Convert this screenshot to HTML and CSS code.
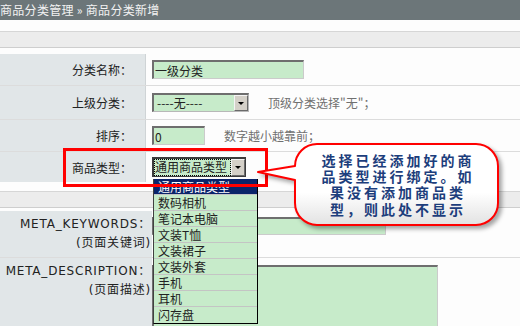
FILE: index.html
```html
<!DOCTYPE html>
<html lang="zh-CN">
<head>
    <meta charset="UTF-8">
    <title>商品分类新增</title>
    <link rel="stylesheet" href="styles.css">
</head>
<body>
    <div class="crumb">商品分类管理 » 商品分类新增</div>
    <div class="tab-bar"></div>

    <div class="form">
        <div class="row row-1">
            <div class="label">分类名称：</div>
            <div class="field">
                <div class="input input-name">一级分类</div>
            </div>
        </div>
        <div class="row row-2">
            <div class="label">上级分类：</div>
            <div class="field">
                <div class="select select-parent">
                    <span class="select-text">----无----</span>
                    <span class="select-btn"><i class="arrow"></i></span>
                </div>
                <span class="hint">顶级分类选择"无"；</span>
            </div>
        </div>
        <div class="row row-3">
            <div class="label">排序：</div>
            <div class="field">
                <div class="input input-sort">0</div>
                <span class="hint">数字越小越靠前；</span>
            </div>
        </div>
        <div class="row row-4">
            <div class="label">商品类型：</div>
            <div class="field">
                <div class="select select-type">
                    <span class="select-text focused">通用商品类型</span>
                    <span class="select-btn"><i class="arrow"></i></span>
                </div>
            </div>
        </div>
    </div>

    <div class="tab-bar tab-bar-2"></div>

    <div class="form meta">
        <div class="row meta-row-1">
            <div class="label">META_KEYWORDS：<br>(页面关键词)</div>
            <div class="field">
                <div class="input input-keywords"></div>
            </div>
        </div>
        <div class="row meta-row-2">
            <div class="label">META_DESCRIPTION：<br>(页面描述)</div>
            <div class="field">
                <div class="input textarea"></div>
            </div>
        </div>
    </div>

    <!-- 展开的下拉列表 -->
    <ul class="dropdown">
        <li class="selected">通用商品类型</li>
        <li>数码相机</li>
        <li>笔记本电脑</li>
        <li>文装T恤</li>
        <li>文装裙子</li>
        <li>文装外套</li>
        <li>手机</li>
        <li>耳机</li>
        <li>闪存盘</li>
    </ul>

    <!-- 标注 -->
    <div class="mark-box"></div>
    <svg class="bubble" width="256" height="96" viewBox="0 0 256 96">
        <defs>
            <linearGradient id="bubble-fill" x1="0" y1="0" x2="0" y2="1">
                <stop offset="0.6" stop-color="#ffffff"/>
                <stop offset="1" stop-color="#e2e2e2"/>
            </linearGradient>
        </defs>
        <path d="M62 4 H221 A22 22 0 0 1 243 26 V63 A22 22 0 0 1 221 85 H62 A22 22 0 0 1 40 63 V40 L3 32 L40 26 A22 22 0 0 1 62 4 Z"
              fill="url(#bubble-fill)" stroke="#ff0000" stroke-width="2" stroke-linejoin="round"/>
    </svg>
    <div class="bubble-text">选择已经添加好的商<br>品类型进行绑定。如<br>果没有添加商品类<br>型，则此处不显示</div>
</body>
</html>
```

FILE: styles.css
```css
body {
    margin: 0;
    font-family: "Noto Sans CJK SC", "DejaVu Sans", sans-serif;
    font-size: 12px;
    color: #222;
    background: #fdfdfd;
    position: relative;
    height: 326px;
    overflow: hidden;
}
.crumb {
    height: 20px;
    line-height: 20px;
    background: #6c7679;
    color: #f2f2f2;
    white-space: nowrap;
    letter-spacing: 0.3px;
}
.tab-bar {
    margin-top: 11px;
    height: 15px;
    background: #ececec;
    border-top: 1px solid #d6d6d6;
    border-bottom: 1px solid #cecece;
}
.tab-bar-2 {
    margin-top: 9px;
}
.form {
    margin-top: 6px;
}
.meta {
    margin-top: 3px;
}
.row {
    display: flex;
    border-bottom: 1px solid #dcdcdc;
}
.label {
    width: 146px;
    flex: none;
    box-sizing: border-box;
    padding-right: 13px;
    background: #e1e6e8;
    border-right: 1px solid #cfd4d6;
    text-align: right;
    display: flex;
    align-items: center;
    justify-content: flex-end;
}
.field {
    display: flex;
    align-items: center;
    padding-left: 6px;
    gap: 19px;
}
.row-1 { height: 31px; }
.row-2 { height: 33px; }
.row-3 { height: 31px; }
.row-4 { height: 30px; border-bottom: none; }

.input {
    box-sizing: border-box;
    height: 19px;
    line-height: 17px;
    padding-left: 1px;
    background: #c7ebca;
    border-top: 2px solid #6e6e6e;
    border-left: 2px solid #6e6e6e;
    border-right: 1px solid #cbcbcb;
    border-bottom: 1px solid #cbcbcb;
    white-space: nowrap;
}
.input-name { width: 152px; }
.input-sort { width: 53px; }

.select {
    box-sizing: border-box;
    height: 19px;
    display: flex;
    align-items: stretch;
    background: #c7ebca;
    border-top: 2px solid #6e6e6e;
    border-left: 2px solid #6e6e6e;
    border-right: 1px solid #b8b8b8;
    border-bottom: 1px solid #b8b8b8;
}
.select-parent { width: 97px; }
.select-type { width: 94px; height: 20px; border-color: #3c3c3c; }
.select-text {
    flex: 1;
    line-height: 16px;
    padding-left: 3px;
    white-space: nowrap;
}
.select-type .select-text {
    padding-left: 0;
    margin: 1px;
    line-height: 14px;
}
.focused {
    outline: 1px dotted #000;
}
.select-btn {
    width: 14px;
    flex: none;
    box-sizing: border-box;
    background: #d4d0c8;
    border-top: 1px solid #f4f4f4;
    border-left: 1px solid #f4f4f4;
    border-right: 1px solid #6a6a6a;
    border-bottom: 1px solid #6a6a6a;
    display: flex;
    align-items: center;
    justify-content: center;
}
.arrow {
    width: 0;
    height: 0;
    border-left: 3px solid transparent;
    border-right: 3px solid transparent;
    border-top: 3px solid #000;
}
.hint {
    color: #707070;
    white-space: nowrap;
}

.meta .label {
    width: 152px;
    padding-right: 1px;
    padding-top: 4px;
    line-height: 19px;
    font-family: "DejaVu Sans", "Noto Sans CJK SC", sans-serif;
    font-size: 12px;
    letter-spacing: 0.8px;
    white-space: nowrap;
    border-right: none;
    display: block;
}
.meta .field {
    align-items: flex-start;
    padding-left: 0;
}
.meta-row-1 { height: 46px; }
.meta-row-1 .field { padding-top: 6px; }
.meta-row-2 { height: 69px; border-bottom: none; }
.meta-row-2 .field { padding-top: 7px; }
.input-keywords { width: 234px; height: 18px; }
.textarea { width: 286px; height: 62px; border-bottom: none; }

/* 浮在表单上方的下拉列表与标注 */
.dropdown {
    position: absolute;
    left: 153px;
    top: 179px;
    width: 105px;
    margin: 0;
    padding: 0;
    list-style: none;
    box-sizing: border-box;
    background: #c7ebca;
    border: 1px solid #000;
    border-left-color: #404040;
    border-top: none;
}
.dropdown li {
    height: 15px;
    line-height: 15px;
    padding-left: 4px;
    border-bottom: 1px solid #c4c4c4;
    white-space: nowrap;
}
.dropdown li:last-child {
    border-bottom: none;
    height: 16px;
}
.dropdown .selected {
    background: #0a246a;
    color: #fff;
}
.mark-box {
    position: absolute;
    left: 63px;
    top: 148px;
    width: 205px;
    height: 39px;
    box-sizing: border-box;
    border: 3px solid #ff0000;
}
.bubble {
    position: absolute;
    left: 255px;
    top: 140px;
    filter: drop-shadow(3px 3px 2px rgba(0, 0, 0, 0.35));
}
.bubble-text {
    position: absolute;
    left: 295px;
    top: 152px;
    width: 203px;
    padding-left: 3px;
    box-sizing: border-box;
    text-align: center;
    font-size: 14px;
    font-weight: bold;
    letter-spacing: 3px;
    line-height: 16.2px;
    color: #1d3e7c;
    white-space: nowrap;
}
```
